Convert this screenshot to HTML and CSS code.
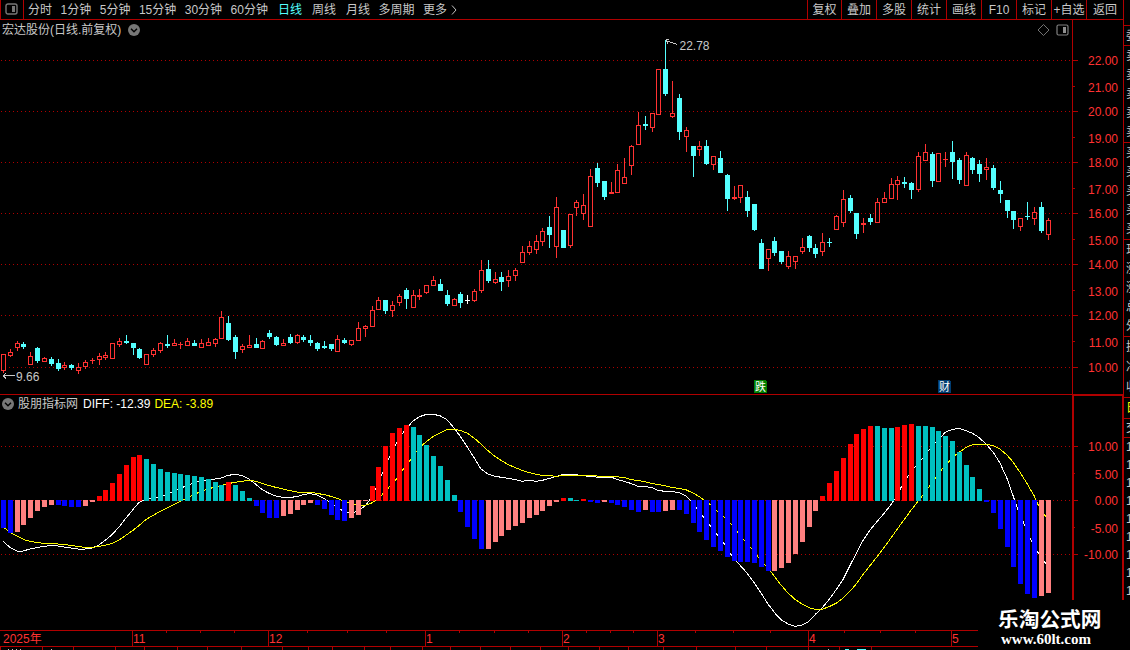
FILE: index.html
```html
<!DOCTYPE html>
<html lang="zh-CN">
<head>
    <meta charset="UTF-8">
    <meta name="viewport" content="width=device-width, initial-scale=1.0">
    <title>宏达股份 日线</title>
    <link rel="stylesheet" href="styles.css">
</head>
<body>
    <div class="app">
        <div class="main">
            <div class="toolbar">
                <div class="layout-btn">
                    <svg width="13" height="12" viewBox="0 0 13 12">
                        <rect x="1" y="1" width="11" height="10" rx="2" fill="none" stroke="#777" stroke-width="1.4"/>
                        <rect x="7" y="3" width="3" height="6" fill="#777"/>
                    </svg>
                </div>
                <div class="periods">
                    <span>分时</span>
                    <span>1分钟</span>
                    <span>5分钟</span>
                    <span>15分钟</span>
                    <span>30分钟</span>
                    <span>60分钟</span>
                    <span class="wide active">日线</span>
                    <span class="wide">周线</span>
                    <span class="wide">月线</span>
                    <span>多周期</span>
                    <span class="more">更多
                        <svg width="6" height="10" viewBox="0 0 6 10"><path d="M1 0.5 L5 5 L1 9.5" fill="none" stroke="#c0c0c0"/></svg>
                    </span>
                </div>
                <div class="actions">
                    <span>复权</span>
                    <span>叠加</span>
                    <span>多股</span>
                    <span>统计</span>
                    <span>画线</span>
                    <span>F10</span>
                    <span>标记</span>
                    <span>+自选</span>
                    <span>返回</span>
                </div>
            </div>

            <div class="chart-head">
                <div class="chart-title">
                    <span>宏达股份(日线.前复权)</span>
                    <svg class="arrow" width="12" height="12" viewBox="0 0 12 12">
                        <circle cx="6" cy="6" r="6" fill="#777"/>
                        <path d="M3 4.8 L6 7.8 L9 4.8" fill="none" stroke="#000" stroke-width="1.4"/>
                    </svg>
                    <svg class="tools" width="31" height="12" viewBox="0 0 31 12">
                        <path d="M5.5 0.5 L11 6 L5.5 11.5 L0 6 Z" fill="none" stroke="#808080" stroke-width="0.9"/>
                        <rect x="19" y="1" width="11" height="10" rx="1.5" fill="none" stroke="#808080" stroke-width="1.2"/>
                        <rect x="25" y="3" width="3" height="6" fill="#909090"/>
                    </svg>
                </div>
                <div class="axis-head"></div>
            </div>
            <svg class="chart" id="priceChart" width="1123" height="355" viewBox="0 39 1123 355"></svg>

            <div class="chart-head indicator-head">
                <div class="chart-title">
                    <svg class="arrow-left" width="12" height="12" viewBox="0 0 12 12">
                        <circle cx="6" cy="6" r="6" fill="#777"/>
                        <path d="M3 4.8 L6 7.8 L9 4.8" fill="none" stroke="#000" stroke-width="1.4"/>
                    </svg>
                    <span>股朋指标网</span>
                    <span class="diff">DIFF: -12.39</span>
                    <span class="dea">DEA: -3.89</span>
                </div>
                <div class="axis-head thick"></div>
            </div>
            <svg class="chart" id="macdChart" width="1123" height="218" viewBox="0 412 1123 218"></svg>
            <svg class="chart" id="timeAxis" width="1123" height="20" viewBox="0 630 1123 20"></svg>
        </div>

        <div class="quote">
            <div class="block top"></div>
            <div class="block one"><span>委比</span></div>
            <div class="block five"><span>卖五</span><span>卖四</span><span>卖三</span><span>卖二</span><span>卖一</span></div>
            <div class="block five"><span>买一</span><span>买二</span><span>买三</span><span>买四</span><span>买五</span></div>
            <div class="block five"><span>现价</span><span>涨跌</span><span>涨幅</span><span>总量</span><span>外盘</span></div>
            <div class="block three"><span>换手</span><span>净资</span><span>收益</span></div>
            <div class="block tab"><span>日</span></div>
            <div class="block deal"><span>交</span></div>
            <div class="block ticks">
                <span>14</span><span>14</span><span>14</span><span>14</span><span>14</span><span>14</span><span>14</span><span>14</span><span>15</span>
            </div>
        </div>

        <div class="watermark">
            <div class="name">乐淘公式网</div>
            <div class="site">www.60lt.com</div>
        </div>
    </div>

    <script>
        const RED = "#ff3232";
        const CYAN = "#54ffff";
        const LINE = "#b00000";

        // type, high, body top, body bottom, low
        const candles = `
r354,354,371,373 r349,352,356,357 r341,343,348,351 c342,344,347,349 r352,356,365,365 c347,348,361,363
r357,358,362,362 c357,359,364,366 c359,363,369,371 r362,365,368,370 c364,365,368,370 r363,367,371,374
r360,362,367,369 r358,360,361,364 r353,356,360,365 r352,355,358,360 r343,343,359,359 r338,341,345,347
c335,341,343,344 c343,343,348,355 c348,349,358,359 r354,354,365,365 r348,350,355,357 r342,343,351,353
c335,344,346,348 r339,343,346,346 r342,344,345,349 r338,341,346,346 c340,343,346,346 r339,343,348,348
r338,342,346,346 r338,339,344,347 r311,317,339,339 c316,323,340,341 c335,337,352,359 r344,346,350,353
r335,345,348,348 c338,344,348,348 r340,341,349,349 c330,333,337,339 c336,337,345,346 r339,343,346,346
c334,337,343,344 r334,335,343,344 c335,337,340,342 c335,340,343,346 c342,343,349,351 c341,346,348,349
c344,344,349,351 r335,339,352,352 c338,340,343,344 r340,340,345,346 r322,328,341,341 r325,326,329,337
r306,310,327,327 r297,300,310,310 c300,300,311,314 r301,305,311,317 r294,296,303,306 c288,290,299,309
r290,295,308,308 r289,295,297,300 r285,285,293,294 r276,280,286,286 c279,284,291,291 c290,295,304,306
r298,299,306,306 c292,294,303,308 w295,300,301,304 r289,291,301,302 r260,270,291,293 c260,269,281,283
r272,279,283,284 c272,277,282,291 r270,276,281,287 r268,270,276,281 r246,252,263,263 r241,246,253,255
r235,241,250,254 r228,231,242,246 c216,227,235,248 r197,207,247,258 c230,230,248,248 r214,214,246,248
r200,202,208,216 r194,205,214,220 r169,176,227,227 c163,168,183,187 c181,181,197,200 r182,192,194,194
r164,170,193,193 r158,177,184,184 r145,146,166,175 r112,125,145,145 c116,124,126,130 r113,113,128,132
r69,69,115,115 c40,69,94,96 r81,113,117,118 c94,98,132,140 r127,130,137,152 c146,146,156,177
r141,146,150,156 c140,146,164,165 r156,156,165,170 c151,158,173,173 c174,175,199,211 r186,197,199,200
r185,185,198,203 c191,197,211,217 c204,204,230,231 c239,243,269,269 r249,249,259,271 c237,241,253,256
c251,251,262,264 r251,256,267,269 r256,256,262,269 r238,247,252,254 c235,236,248,252 c244,248,254,258
r233,242,252,256 c238,242,243,247 r215,216,230,230 r190,199,223,227 c195,198,211,213 c213,213,234,239
r218,223,225,233 c214,218,222,225 r198,202,223,223 r192,198,203,203 r178,184,199,199 r176,180,185,200
c177,182,184,188 c182,183,190,199 r152,156,190,192 r144,152,161,161 c152,154,181,187 r153,153,182,182
r152,159,160,167 c141,152,162,179 c158,160,180,184 r152,155,186,186 c157,158,170,174 c160,164,174,182
r158,167,170,180 c165,168,188,190 c181,190,194,203 c200,200,211,218 c211,211,220,229 r218,218,227,231
c202,216,217,220 r207,212,219,225 c202,207,231,233 r218,220,235,240`.trim().split(/\s+/);

        // colour key and end of each histogram bar
        const bars = `
B528 B533 P532 P525 P518 P511 P507 P505 B505 B506 B507 B507 P506 P502 R496 R490 R483 R474 R465 R457
R455 T459 T464 T469 T472 T473 T474 T475 T476 T477 T479 T482 T485 R482 T485 T491 T498 B506 B513 B518
B518 P516 P514 P510 P505 P503 B505 B509 B515 B520 B521 P518 P515 P501 R486 R467 R446 R433 R428 R425
T427 T435 T445 T456 T466 T480 T495 B512 B527 B539 B549 P549 P542 P536 P530 P526 P523 P518 P515 P511
P506 P502 R498 T498 T500 R499 B502 B503 P502 B503 B505 B507 B510 B512 P510 B512 B512 P511 P510 B510
B514 B523 B532 B540 B547 B551 B557 B561 B562 B562 B563 B567 B571 P571 P568 P563 P554 P542 P527 P511
R496 R483 R471 R458 R444 R434 R429 R426 T426 T428 T428 R427 R425 R424 T426 T426 T427 T431 T436 T441
T452 T465 T477 T489 B502 B513 B529 B547 B567 B584 B594 B598 P596 P593`.trim().split(/\s+/);
        const barColors = { R: "#ff0000", T: "#00c0c0", B: "#0000ff", P: "#ff8080" };

        const diff = "3,541 10,547.5 17,551 23,551 30,549 37,547.5 44,546.5 51,545.5 58,546 64,547 71,548 78,549 85,549 92,548 99,545 105,540.5 112,534.7 119,527 126,518 133,509.5 139,502.5 146,499 153,498 160,496.5 167,494.5 174,491 180,488 187,486 194,482.7 201,481 208,480 215,479 221,478 228,475.4 235,474.3 242,475.5 249,479 256,484.5 262,489.5 269,493.3 276,496 283,497.5 290,497.5 297,496.5 304,494.5 310,493.5 317,495 324,498.5 331,503 338,508.5 345,511.5 352,513.3 358,510.5 365,506 372,497 376,488 382,474 389,458 396,444 403,432.7 410,424.5 413,421 420,416.5 426,414.5 433,414.3 440,415.7 447,419.7 454,428 460,436 467,446.5 474,457.5 481,469 488,474 495,476.3 502,477.4 508,478.4 515,479.5 522,481.3 529,480.4 536,481.3 542,480.4 549,478.6 556,476.5 563,474.5 574,474.5 580,475.3 590,476.5 600,477.4 612,477.4 617,479.4 624,481.3 631,483.5 638,486.3 645,486.4 652,487.7 658,490.3 665,491.4 672,491.4 679,492.7 686,496 691,501 696,507.5 703,516.5 710,525.5 717,534.3 724,543.5 731,554.5 738,563 747,573 754,582.5 761,593 768,604 775,613.3 781,619.7 788,624 795,626.4 802,625 809,621.3 816,613.7 822,608 829,599.5 836,590 843,579.5 850,565.5 857,552 863,540.5 870,530 877,521.5 884,513.5 891,504.5 897,496 901,487.5 907,477.5 914,468 922,459 929,450 936,442 941,437 945,432.5 952,429.4 959,428.5 966,430.7 972,433 979,437.5 986,444 993,452 1000,463 1007,478.5 1013,495.5 1017,507 1024,524 1031,540 1038,552.5 1046,564";
        const dea = "3,527 8,530.5 13,534 20,537.5 25,540 30,541.3 37,542.5 44,543.4 58,544 64,544.5 71,545.4 78,546.4 85,547.4 92,547.4 99,546.4 105,545.3 112,543.5 119,540 126,535.2 133,530.3 139,525.5 146,519.5 153,515.5 160,511.5 167,508 174,504.5 181,501 187,498 194,494.5 201,491.5 208,489 215,487 221,485.7 228,483.7 235,482.3 242,481.3 249,480.4 256,481.3 262,483.4 269,485.5 276,487.4 283,489 290,490.6 297,492 304,492.4 312,492.5 317,493.4 324,494.6 331,496.4 338,498.7 345,501.4 351,503.7 358,505.4 365,505.3 372,502.8 378,499 387,489.5 396,479.5 403,469.5 410,460.5 416,452 422,445.3 428,440.3 433,436.7 440,433 447,429.4 454,429.4 460,430.4 467,433 474,438 481,444 488,450.7 495,456.4 502,461 508,464.5 515,467.5 522,470.4 529,472.5 536,474.2 542,475.3 549,475.4 556,476.4 563,475.4 590,475.4 600,476.3 617,476.8 624,477.5 631,479.6 638,480.5 645,481.8 652,483.5 658,484.5 665,485.7 672,487.4 679,488.4 686,489.8 693,493 699,496.5 704,500 711,505 717,511 724,517 731,524 738,532.5 744,540 751,548 758,556.7 764,564 771,572 781,585 788,593 795,599.3 802,604 809,607.7 816,609.4 822,609.4 829,606.7 836,603.3 843,598.3 850,591.3 857,583 863,574.5 870,565.7 877,556.7 884,547.5 891,538 897,529.5 904,519.8 911,510.3 918,501.3 929,487 936,477.3 942,469.3 949,461.7 955,455.5 959,452.5 966,447.3 972,445 979,444.3 986,444.3 993,445.5 1000,449 1007,455 1013,462 1020,472.3 1027,483.5 1034,495.5 1038,504.5 1046,517";

        const rect = (x, y, w, h, fill) => `<rect x="${x}" y="${y}" width="${w}" height="${h}" fill="${fill}"/>`;
        const text = (x, y, str, cls) => `<text x="${x}" y="${y}" class="${cls}">${str}</text>`;
        const grid = (y) => `<line x1="1" x2="1071" y1="${y + 0.5}" y2="${y + 0.5}" class="grid"/>`;
        const xAt = (i) => Math.round(2.937 + 6.8278 * i);

        function drawPrice() {
            let out = "";
            [60, 111, 162, 213, 264, 315, 367].forEach((y) => {
                out += grid(y) + rect(1073, y, 5, 1, LINE);
            });
            [86, 137, 188, 239, 290, 341].forEach((y) => out += rect(1073, y, 2, 1, LINE));
            [60, 87, 111, 138, 162, 189, 213, 240, 264, 291, 315, 342, 367].forEach((y, i) => {
                out += text(1118, y + 5, (22 - i).toFixed(2), "label");
            });

            candles.forEach((c, i) => {
                const [h, t, b, l] = c.slice(1).split(",").map(Number);
                const x = xAt(i);
                const color = { r: RED, c: CYAN, w: "#fff" }[c[0]];
                out += rect(x, h, 1, l - h, color) + rect(x - 2, t, 5, b - t, color);
                if (c[0] === "r" && b - t > 2) {
                    out += rect(x - 1, t + 1, 3, b - t - 2, "#000");
                }
            });

            // high and low callouts
            out += `<path d="M677 44.5 L666 40.5 M666 39.5 h3 M666 40 l2 4" class="callout"/>`;
            out += `<path d="M15 375.5 H3 M3 375.5 l3 -2 M3 375.5 l3 3" class="callout"/>`;
            out += text(679.5, 50, "22.78", "note") + text(16, 381, "9.66", "note");

            out += `<path d="M754 380 h11 l2 2 v11 h-13 z" fill="#008000"/>` + text(755, 391, "跌", "mark");
            out += `<path d="M938 380 h11 l2 2 v11 h-13 z" fill="#003c70"/>` + text(939, 391, "财", "mark");
            out += rect(1072, 39, 1, 355, LINE);
            document.getElementById("priceChart").innerHTML = out;
        }

        function drawMacd() {
            let out = "";
            [446, 500, 554].forEach((y) => out += grid(y) + rect(1074, y, 4, 1, LINE));
            [473, 527].forEach((y) => out += rect(1074, y, 1, 1, LINE));
            [446, 474, 500, 528, 554].forEach((y, i) => {
                out += text(1118, y + 5, (10 - i * 5).toFixed(2), "label");
            });
            out += `<polyline points="${diff}" class="line diff-line"/>`;
            out += `<polyline points="${dea}" class="line dea-line"/>`;

            bars.forEach((bar, i) => {
                const end = Number(bar.slice(1));
                const up = bar[0] === "R" || bar[0] === "T";
                out += rect(xAt(i) - 2, up ? end : 500, 5, up ? 501 - end : end - 500, barColors[bar[0]]);
            });
            out += rect(1072, 412, 2, 218, LINE) + rect(1122, 412, 1, 218, LINE);
            document.getElementById("macdChart").innerHTML = out;
        }

        function drawTime() {
            let out = rect(0, 630, 1123, 1, LINE) + rect(0, 646, 1123, 1, LINE);
            [[132, "11"], [268, "12"], [425, "1"], [562, "2"], [657, "3"], [808, "4"], [951, "5"]].forEach(([x, m]) => {
                out += rect(x, 630, 1, 16, LINE) + text(x + 1, 643, m, "month");
            });
            out += text(3, 643, "2025年", "month");
            [166, 200, 234, 307, 347, 386, 459, 494, 528, 586, 610, 633, 695, 733, 770, 844, 880, 915].forEach((x) => {
                out += rect(x, 631, 1, 2, LINE);
            });
            [0, 42, 73, 115, 144, 177, 207, 241, 282, 308, 332, 364, 390, 422, 450, 480, 510, 540, 568, 599, 628, 663, 696, 735, 766, 808, 839, 871].forEach((x) => {
                out += rect(x, 647, 1, 3, LINE);
            });
            // tops of the next row
            [8, 12, 16, 20, 51, 828].forEach((x) => out += rect(x, 649, 1, 1, "#c0c0c0"));
            out += rect(845, 649, 4, 1, CYAN) + rect(857, 649, 9, 1, CYAN);
            document.getElementById("timeAxis").innerHTML = out;
        }

        drawPrice();
        drawMacd();
        drawTime();
    </script>
</body>
</html>
```
FILE: styles.css
```css
* {
    margin: 0;
    padding: 0;
    box-sizing: border-box;
}

body {
    width: 1130px;
    height: 650px;
    overflow: hidden;
    background: #000;
    color: #c8c8c8;
    font-family: "Liberation Sans", "Noto Sans CJK SC", sans-serif;
    font-size: 12px;
    line-height: 16px;
}

.app {
    position: relative;
    display: flex;
    width: 1130px;
    height: 650px;
}

.main {
    width: 1123px;
    display: flex;
    flex-direction: column;
}

.toolbar {
    display: flex;
    height: 20px;
    border-bottom: 1px solid #b00000;
    white-space: nowrap;
}

.layout-btn {
    width: 24px;
    padding: 3px 0 0 4px;
    border-left: 1px solid #b00000;
    border-right: 1px solid #b00000;
}

.layout-btn svg,
.chart {
    display: block;
}

.periods {
    display: flex;
    align-items: flex-start;
    flex: 1;
    gap: 8.5px;
    padding: 2px 0 0 4px;
}

.periods .wide {
    margin-left: 1.5px;
}

.periods .active {
    color: #54ffff;
}

.more {
    display: flex;
    align-items: center;
    gap: 4px;
}

.actions {
    display: flex;
}

.actions span {
    display: flex;
    justify-content: center;
    width: 35px;
    padding-top: 2px;
    border-left: 1px solid #b00000;
}

.actions span:first-child {
    width: 34px;
}

.actions span:last-child {
    width: 37px;
}

.chart-head {
    display: flex;
    height: 19px;
}

.chart-title {
    display: flex;
    align-items: center;
    flex: 1;
    padding-left: 2px;
}

.arrow {
    margin-left: 7px;
}

.tools {
    margin-left: auto;
    margin-right: 3px;
}

.axis-head {
    width: 51px;
    border-left: 1px solid #b00000;
}

.indicator-head {
    height: 18px;
    border-top: 1px solid #b00000;
}

.axis-head.thick {
    border: 1px solid #b00000;
    border-left-width: 2px;
    border-bottom: none;
}

.arrow-left {
    margin-right: 4px;
}

.diff {
    margin-left: 5px;
    color: #fff;
}

.dea {
    margin-left: 4px;
    color: #ff0;
}

.chart {
    shape-rendering: crispEdges;
}

.grid {
    stroke: #b00000;
    stroke-width: 1;
    stroke-dasharray: 1 3;
}

.label,
.month {
    fill: #ff3232;
}

.label {
    text-anchor: end;
}

.note {
    fill: #c8c8c8;
}

.mark {
    fill: #fff;
    font-size: 11px;
}

.callout {
    fill: none;
    stroke: #c8c8c8;
}

.line {
    fill: none;
    stroke-width: 1;
}

.diff-line {
    stroke: #fff;
}

.dea-line {
    stroke: #ff0;
}

.quote {
    width: 7px;
    overflow: hidden;
    border-left: 1px solid #b00000;
    white-space: nowrap;
}

.block {
    display: flex;
    flex-direction: column;
    justify-content: space-around;
    padding-left: 2px;
    border-bottom: 1px solid #b00000;
}

.top {
    height: 26px;
}

.one {
    height: 20px;
}

.five {
    height: 97px;
}

.three {
    height: 61px;
}

.tab {
    height: 21px;
    color: #ff0;
}

.deal {
    height: 19px;
}

.ticks {
    height: 162px;
    border-bottom: none;
}

.watermark {
    position: absolute;
    left: 978px;
    top: 600px;
    width: 152px;
    height: 50px;
    padding: 7px 0 0 20px;
    background: #000;
    color: #fff;
    font-weight: bold;
}

.name {
    font-size: 20.7px;
    line-height: 25px;
}

.site {
    padding-left: 3px;
    font-family: "Liberation Serif", serif;
    font-size: 15px;
    line-height: 15px;
}
```
